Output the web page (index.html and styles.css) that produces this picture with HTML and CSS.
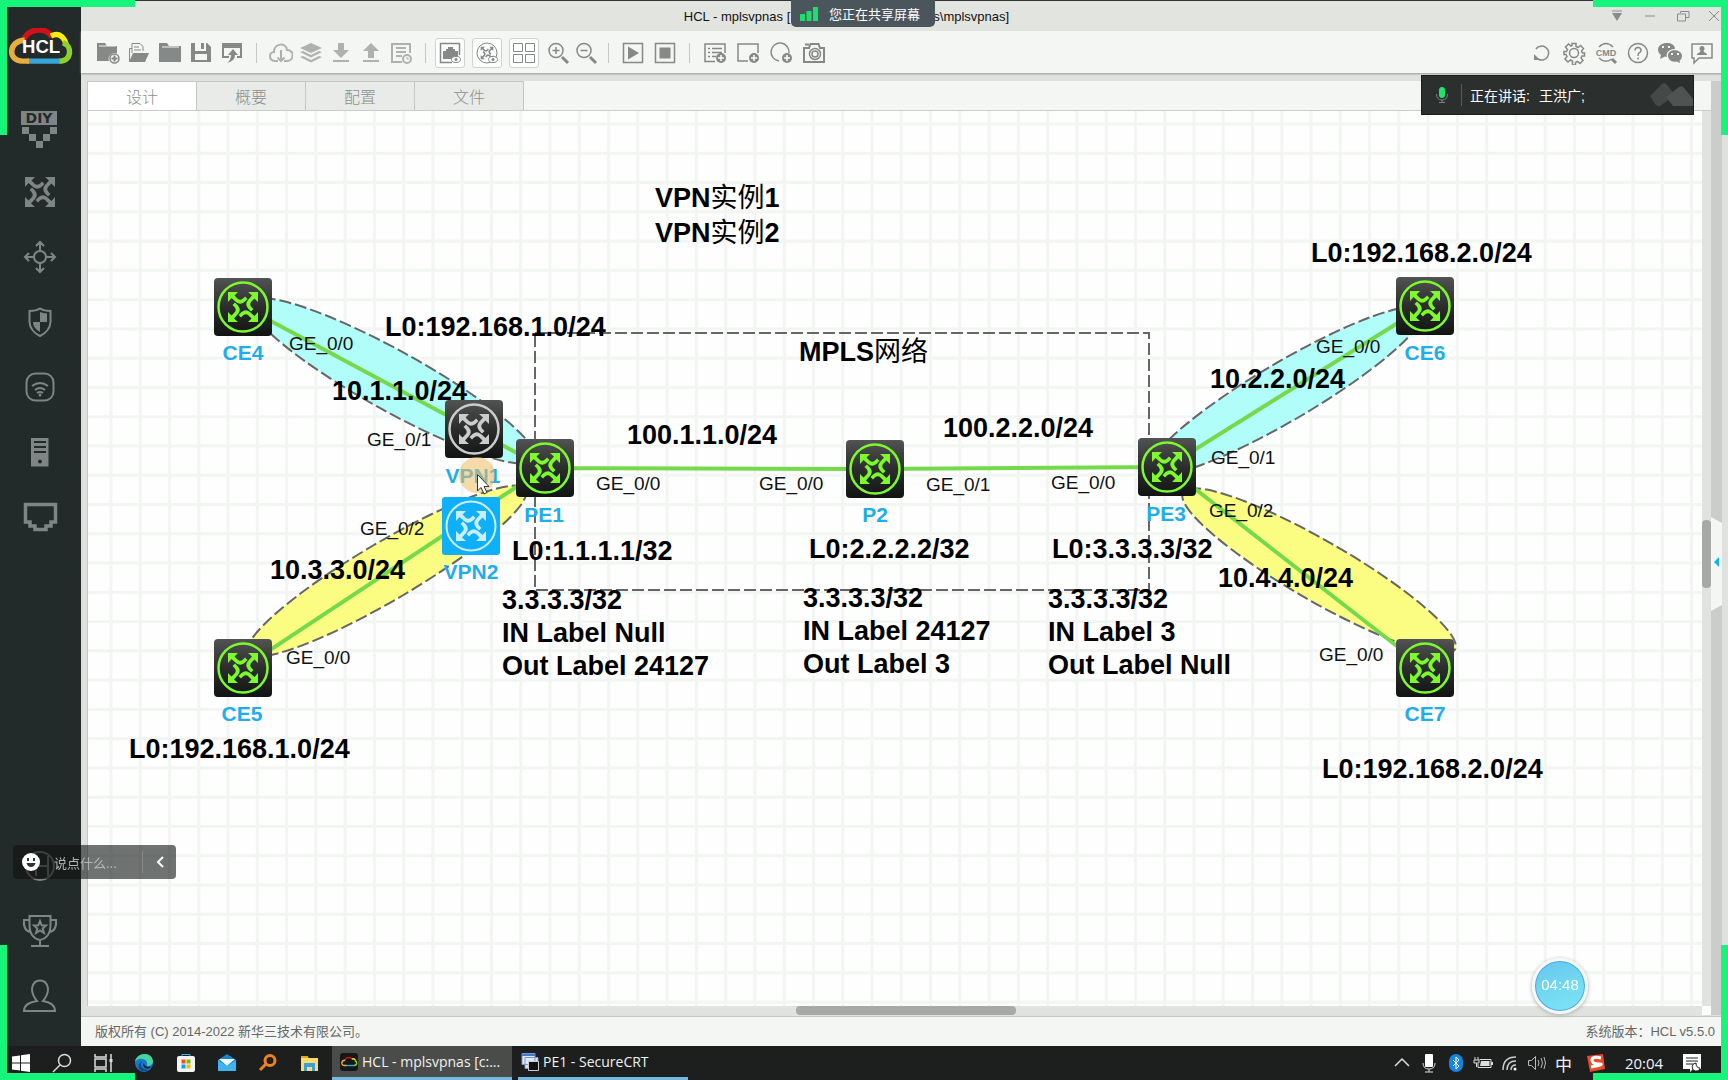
FILE: index.html
```html
<!DOCTYPE html>
<html lang="zh-CN">
<head>
<meta charset="utf-8">
<title>HCL - mplsvpnas</title>
<link rel="stylesheet" href="styles.css">
</head>
<body>
<svg class="defs" aria-hidden="true">
  <defs>
    <g id="arrow-arm">
      <path d="M-15-15H-5L-8.500-11.500L-5.500-8.500Q-3-6 0-8.500L2-10.500L4.500-8L1.500-5Q-3-1.500-7-5L-11.500-9L-15-5Z"/>
    </g>
    <g id="arrows">
      <use href="#arrow-arm"/>
      <use href="#arrow-arm" transform="rotate(90)"/>
      <use href="#arrow-arm" transform="rotate(180)"/>
      <use href="#arrow-arm" transform="rotate(270)"/>
    </g>
    <linearGradient id="dark" x1="0" y1="0" x2="0" y2="1">
      <stop offset="0" stop-color="#525453"/><stop offset=".5" stop-color="#2c2e2d"/><stop offset="1" stop-color="#121413"/>
    </linearGradient>
    <g id="router">
      <rect x="-29" y="-29" width="58" height="58" rx="4" fill="url(#dark)"/>
      <circle r="24.500" fill="none" stroke="currentColor" stroke-width="2.500"/>
      <use href="#arrows" fill="currentColor"/>
    </g>
    <g id="cloud" fill="none" stroke-width="5">
      <path d="M21 14C27 3 42 3 47 12" stroke="#d11218"/>
      <path d="M46 11C54 7 59 13 60 20" stroke="#f7ee13"/>
      <path d="M57 17C66 20 65 34 54 34H53" stroke="#8fd02c"/>
      <path d="M54 34H24" stroke="#36a5d8"/>
      <path d="M26 34H20C6 34 7 15 22 15" stroke="#e9ad3d"/>
    </g>
    <pattern id="grid" x="109.500" y="122.500" width="29.270" height="29.270" patternUnits="userSpaceOnUse">
      <path d="M0 1.500H29.270M1.500 0V29.270" stroke="#f2f5f2" stroke-width="3"/>
    </pattern>
  </defs>
</svg>

<div class="desktop">
  <div class="app">
    <nav class="sidebar" aria-label="设备">
      <svg class="logo" viewBox="4 4 64 36"><use href="#cloud"/><text x="37" y="27" class="logo-text">HCL</text></svg>
      <div class="side-group">
        <button class="side-btn" aria-label="DIY"><svg viewBox="-20 -20 40 40"><path fill="currentColor" d="M-19-16h36v14h-36zM-18 0h7v7h-7zM-11 7h7v7h-7zM-4 14h7v7h-7zM3 7h7v7H3zM10 0h7v7h-7z"/><text x="-1" y="-4" class="diy">DIY</text></svg></button>
        <button class="side-btn" aria-label="路由器"><svg viewBox="-20 -20 40 40"><use href="#arrows" fill="currentColor"/></svg></button>
        <button class="side-btn" aria-label="交换机"><svg viewBox="-20 -20 40 40"><g class="line"><circle r="6"/><path d="M0-6V-15M-4-11L0-15L4-11M0 6V15M-4 11L0 15L4 11M-6 0H-15M-11-4L-15 0L-11 4M6 0H15M11-4L15 0L11 4"/></g></svg></button>
        <button class="side-btn" aria-label="防火墙"><svg viewBox="-20 -20 40 40"><path class="line" d="M-10.500-11Q-4-11 0-13.500Q4-11 10.500-11V0Q10 9 0 14Q-10 9-10.500 0Z"/><path fill="currentColor" d="M0-10Q3-9 7-8.500V0H0ZM0 0V10Q-7 6-7 0Z"/></svg></button>
        <button class="side-btn" aria-label="无线"><svg viewBox="-20 -20 40 40"><rect class="line" x="-13.500" y="-13.500" width="27" height="27" rx="9"/><path class="line" d="M-8-1Q0-7 8-1M-5 3Q0-1 5 3"/><path class="line" d="M-3 6Q0 4 3 6"/><circle cy="8" r="1.500" fill="currentColor"/></svg></button>
        <button class="side-btn" aria-label="服务器"><svg viewBox="-20 -20 40 40"><path fill="currentColor" fill-rule="evenodd" d="M-9-14H8.500V14.500H-9ZM-6-11V-9H6V-11ZM-6-6V-4H6V-6ZM-6-1V1H6V-1ZM-2 9.500A2 2 0 1 0 2 9.500A2 2 0 1 0-2 9.500"/></svg></button>
        <button class="side-btn" aria-label="端口"><svg viewBox="-20 -20 40 40"><path fill="none" stroke="currentColor" stroke-width="3.500" d="M-14.500-12.500H15.500V5H11V9H6V12.500H-5V9H-10V5H-14.500Z"/></svg></button>
      </div>
      <div class="side-group side-bottom">
        <button class="side-btn" aria-label="H3C"><svg viewBox="-20 -20 40 40"><circle class="line" r="14"/><path class="line" d="M-4-10V10M8-10V10M-4 0H8"/></svg></button>
        <button class="side-btn" aria-label="奖杯"><svg viewBox="-20 -20 40 40"><path class="line" d="M-10.500-15H10.500V-5Q10 7 0 9Q-10 7-10.500-5ZM-10.500-11H-16Q-17 0-9 1M10.500-11H16Q17 0 9 1M0 9V15M-9 15H9M0-10L1.700-5.700L6-5.500L2.700-2.500L4 2L0-.500L-4 2L-2.700-2.500L-6-5.500L-1.700-5.700Z"/></svg></button>
        <button class="side-btn" aria-label="用户"><svg viewBox="-20 -20 40 40"><path class="line" d="M-3 5Q-8-1-8-7Q-7-15.500 0-15.500Q7-15.500 8-7Q8-1 3 5Q15 7 15 15H-16Q-16 7-3 5Z"/></svg></button>
      </div>
    </nav>

    <main class="main">
      <header class="titlebar">
        <div class="title"><span>HCL - mplsvpnas [</span><span>s\mplsvpnas]</span></div>
        <div class="win-controls">
          <button aria-label="菜单"><svg viewBox="0 0 16 16"><path d="M3 3h10" stroke="currentColor"/><path d="M3 5h10l-5 8z" fill="currentColor"/></svg></button>
          <button aria-label="最小化"><svg viewBox="0 0 16 16"><path d="M3 8h10" stroke="currentColor"/></svg></button>
          <button aria-label="还原"><svg viewBox="0 0 16 16"><path d="M5.500 5V3.500H14V9.500H11M2.500 6H10.500V13H2.500Z" fill="none" stroke="currentColor"/></svg></button>
          <button aria-label="关闭"><svg viewBox="0 0 16 16"><path d="M3 3L13 13M13 3L3 13" stroke="currentColor"/></svg></button>
        </div>
      </header>

      <div class="toolbar">
        <div class="tools w31">
          <button aria-label="新建"><svg viewBox="0 0 24 24"><path fill="currentColor" d="M1 2h8l2 3h10v7.500a6 6 0 0 0-8 7.500H1z"/><path d="M3 5h17" stroke="#f4f6f3"/><circle cx="18.500" cy="17.500" r="4.500" fill="none" stroke="currentColor" stroke-width="1.500"/><path d="M18.500 14.500v6M15.500 17.500h6" stroke="currentColor" stroke-width="2"/></svg></button>
          <button aria-label="打开"><svg viewBox="0 0 24 24"><path fill="none" stroke="currentColor" d="M2.500 20V7.500H5M5 12V2.500h8l3 3V10M7 6h5M7 9h7"/><path fill="currentColor" d="M6 12h16l-4 9H2z"/></svg></button>
          <button aria-label="工程"><svg viewBox="0 0 24 24"><path fill="currentColor" d="M1 2h8l2 3h12v16H1z"/><path d="M4 6h17" stroke="#f4f6f3"/></svg></button>
          <button aria-label="保存"><svg viewBox="0 0 24 24"><path fill="currentColor" fill-rule="evenodd" d="M2 2h4v8h11V2h1l4 4v15H2zM6 13v6h12v-6zM12 2h3v6h-3z"/></svg></button>
          <button aria-label="导出"><svg viewBox="0 0 24 24"><path fill="none" stroke="currentColor" stroke-width="2" d="M9 16H3V3h18v13h-4"/><path fill="currentColor" d="M3 3h18v4H3zM13 8l5 6h-3q0 6-8 8q4-3 4-8H8z"/></svg></button>
        </div>
        <i class="sep"></i>
        <div class="tools w30 pale">
          <button aria-label="下载云"><svg viewBox="0 0 24 24"><path fill="none" stroke="currentColor" stroke-width="2" d="M9 20H6C-1 19 0 11 5 11C5 2 17 1 18 9C26 9 25 20 18 20H15M12 9v11M8.500 16.500L12 20l3.500-3.500"/></svg></button>
          <button aria-label="图层"><svg viewBox="0 0 24 24"><path fill="currentColor" d="M12 2l11 5-11 5L1 7zM1 11l3-1 8 4 8-4 3 1-11 5.500zM1 16l3-1 8 4 8-4 3 1-11 5.500z"/></svg></button>
          <button aria-label="下载"><svg viewBox="0 0 24 24"><path fill="currentColor" d="M9 2h6v7h5l-8 8-8-8h5zM4 19h16v2H4z"/></svg></button>
          <button aria-label="上传"><svg viewBox="0 0 24 24"><path fill="currentColor" d="M12 2l8 8h-5v7H9v-7H4zM4 19h16v2H4z"/></svg></button>
          <button aria-label="日志"><svg viewBox="0 0 24 24"><path fill="none" stroke="currentColor" stroke-width="2" d="M13 21H3V3h18v9M7 7h10M7 11h10M7 15h6"/><circle cx="18" cy="18" r="4" fill="none" stroke="currentColor" stroke-width="2"/><path d="M18 16v2h2" stroke="currentColor" fill="none"/></svg></button>
        </div>
        <i class="sep"></i>
        <div class="tools boxed">
          <button aria-label="显示接口"><svg viewBox="0 0 24 24"><path fill="none" stroke="currentColor" stroke-width="1.500" d="M14 21.500H2.500v-19h19V14"/><path fill="currentColor" d="M5 10h3V8h2V6h5v2h2v2h3v5l-6 3H5z"/><ellipse cx="18" cy="18.500" rx="4.500" ry="3" fill="#fff" stroke="currentColor"/><circle cx="18" cy="18.500" r="1.500" fill="currentColor"/></svg></button>
          <button aria-label="显示设备"><svg viewBox="0 0 24 24"><circle cx="12" cy="12" r="10" fill="none" stroke="currentColor"/><use href="#arrows" fill="currentColor" transform="translate(12 12) scale(.42)"/><ellipse cx="18" cy="18.500" rx="4.500" ry="3" fill="#fff" stroke="currentColor"/><circle cx="18" cy="18.500" r="1.500" fill="currentColor"/></svg></button>
          <button aria-label="显示网格"><svg viewBox="0 0 24 24"><path fill="none" stroke="currentColor" d="M1.500 2.500h9v8h-9zM13.500 2.500h9v8h-9zM1.500 13.500h9v8h-9zM13.500 13.500h9v8h-9z"/></svg></button>
        </div>
        <div class="tools w28">
          <button aria-label="放大"><svg viewBox="0 0 24 24"><circle cx="10" cy="9.500" r="7" fill="none" stroke="currentColor" stroke-width="1.500"/><path d="M10 6v7M6.500 9.500h7" stroke="currentColor" stroke-width="1.500"/><path d="M16 16l6 6" stroke="currentColor" stroke-width="3"/></svg></button>
          <button aria-label="缩小"><svg viewBox="0 0 24 24"><circle cx="10" cy="9.500" r="7" fill="none" stroke="currentColor" stroke-width="1.500"/><path d="M6.500 9.500h7" stroke="currentColor" stroke-width="1.500"/><path d="M16 16l6 6" stroke="currentColor" stroke-width="3"/></svg></button>
        </div>
        <i class="sep tight"></i>
        <div class="tools w32">
          <button aria-label="启动"><svg viewBox="0 0 24 24"><path fill="none" stroke="currentColor" stroke-width="1.500" d="M2.500 2.500h19v19h-19z"/><path fill="currentColor" d="M7 5.500l11 6.500-11 6.500z"/></svg></button>
          <button aria-label="停止"><svg viewBox="0 0 24 24"><path fill="none" stroke="currentColor" stroke-width="1.500" d="M2.500 2.500h19v19h-19z"/><path fill="currentColor" d="M6.500 6.500h11v11h-11z"/></svg></button>
        </div>
        <i class="sep tight"></i>
        <div class="tools w33">
          <button aria-label="添加文本"><svg viewBox="0 0 24 24"><path fill="none" stroke="currentColor" stroke-width="1.500" d="M12 20.500H2V3h20v9M5 7.500h2M9 7.500h10M5 11.500h2M9 11.500h10M5 15.500h2M9 15.500h4"/><circle cx="18" cy="17" r="5" fill="currentColor"/><path d="M18 14v6M15 17h6" stroke="#fff" stroke-width="1.500"/></svg></button>
          <button aria-label="添加矩形"><svg viewBox="0 0 24 24"><path fill="none" stroke="currentColor" stroke-width="1.500" d="M12 20H2V3h20v9"/><circle cx="18" cy="17" r="5" fill="currentColor"/><path d="M18 14v6M15 17h6" stroke="#fff" stroke-width="1.500"/></svg></button>
          <button aria-label="添加椭圆"><svg viewBox="0 0 24 24"><path fill="none" stroke="currentColor" stroke-width="1.500" d="M10 20A9 9 0 1 1 20 12"/><circle cx="18" cy="17" r="5" fill="currentColor"/><path d="M18 14v6M15 17h6" stroke="#fff" stroke-width="1.500"/></svg></button>
          <button aria-label="截图"><svg viewBox="0 0 24 24"><path fill="none" stroke="currentColor" stroke-width="2" d="M2 7h5l1.500-4h8L18 7h4v14H2z"/><circle cx="13" cy="13" r="5.500" fill="none" stroke="currentColor" stroke-width="1.500"/><circle cx="13" cy="13" r="3" fill="none" stroke="currentColor" stroke-width="1.500"/><path d="M3 3.500h4" stroke="currentColor" stroke-width="2"/></svg></button>
        </div>
        <div class="tools w32 right">
          <button aria-label="刷新"><svg viewBox="0 0 24 24"><path fill="none" stroke="currentColor" stroke-width="1.500" d="M6 8A7 7 0 1 1 8 18"/><path fill="currentColor" d="M4 13v6h6z"/></svg></button>
          <button aria-label="设置"><svg viewBox="0 0 24 24"><circle cx="12" cy="12" r="4.500" fill="none" stroke="currentColor" stroke-width="1.500"/><path fill="none" stroke="currentColor" stroke-width="1.500" d="M10 2.500h4v3l2 1 2.500-2 3 3-2 2.500 1 2h2v3h-2.500l-1 2 2 2.500-3 3-2.500-2-2 1v2.500h-3V20l-2-1-2.500 2-3-3 2-2.500-1-2H2v-3h2.500l1-2-2-2.500 3-3 2.500 2 1-.500z"/></svg></button>
          <button aria-label="CMD"><svg viewBox="0 0 24 24"><path fill="none" stroke="currentColor" stroke-width="1.500" d="M5 6Q12-1 19 6M5 17Q11 23 18 18"/><path stroke="currentColor" stroke-width="3" d="M18 18l4 4"/><text x="12" y="15" class="cmd">CMD</text></svg></button>
          <button aria-label="帮助"><svg viewBox="0 0 24 24"><circle cx="12" cy="12" r="9.500" fill="none" stroke="currentColor" stroke-width="1.500"/><path fill="none" stroke="currentColor" stroke-width="1.500" d="M9 9.500Q9 6.500 12 6.500T15 9.500Q15 11 13 12Q12 12.500 12 15M12 16.500v2"/></svg></button>
          <button aria-label="微信"><svg viewBox="0 0 24 24"><path fill="currentColor" d="M0 9C0 0 17 0 17 8C9 8 8 14 9 16L7 15.500 2 18 3 14Q0 12 0 9"/><path fill="currentColor" d="M10 14.500C10 7 24 8 24 15Q24 18 21.500 19.500L22 22 18.500 20.500C13 21.500 10 18 10 14.500"/><path d="M4 6h2M10 6h2M13 13h2M19 13h2" stroke="#f4f6f3" stroke-width="2"/></svg></button>
          <button aria-label="反馈"><svg viewBox="0 0 24 24"><path fill="none" stroke="currentColor" stroke-width="1.500" d="M2 3h20v14H9l-5 5v-5H2z"/><circle cx="12" cy="7.500" r="2.500" fill="currentColor"/><path fill="currentColor" d="M11 9h2l1 2 3 2v1H7v-1l3-2z"/></svg></button>
        </div>
      </div>

      <div class="workspace">
        <div class="editor">
          <div class="tabs" role="tablist">
            <button class="tab active" role="tab">设计</button>
            <button class="tab" role="tab">概要</button>
            <button class="tab" role="tab">配置</button>
            <button class="tab" role="tab">文件</button>
          </div>
          <div class="canvas-row">
            <svg class="canvas" role="img" aria-label="MPLS 网络拓扑">
              <g transform="translate(-88 -111)">
                <rect x="88" y="111" width="100%" height="100%" fill="#fdfefd"/>
                <rect x="88" y="111" width="100%" height="100%" fill="url(#grid)"/>
                <g class="shape">
                  <rect x="535" y="333" width="614" height="257" fill="none"/>
                  <ellipse class="cyan" rx="162" ry="30" transform="translate(393 381) rotate(29)"/>
                  <ellipse class="yellow" rx="161" ry="29" transform="translate(387 571) rotate(-30.500)"/>
                  <ellipse class="cyan" rx="158" ry="29" transform="translate(1286 391) rotate(-30.500)"/>
                  <ellipse class="yellow" rx="157" ry="30" transform="translate(1319 571) rotate(30)"/>
                </g>
                <g class="links">
                  <path d="M243 306L545 468M243 668L545 468M545 468L875 469M875 469L1167 467M1167 467L1425 306M1167 467L1425 668"/>
                </g>
                <g class="note">
                  <text x="655" y="207">VPN<tspan class="han">实例</tspan>1</text>
                  <text x="655" y="242">VPN<tspan class="han">实例</tspan>2</text>
                  <text x="385" y="336">L0:192.168.1.0/24</text>
                  <text x="799" y="361">MPLS<tspan class="han">网络</tspan></text>
                  <text x="332" y="400">10.1.1.0/24</text>
                  <text x="627" y="444">100.1.1.0/24</text>
                  <text x="943" y="437">100.2.2.0/24</text>
                  <text x="1210" y="388">10.2.2.0/24</text>
                  <text x="1311" y="262">L0:192.168.2.0/24</text>
                  <text x="270" y="579">10.3.3.0/24</text>
                  <text x="1218" y="587">10.4.4.0/24</text>
                  <text x="512" y="560">L0:1.1.1.1/32</text>
                  <text x="809" y="558">L0:2.2.2.2/32</text>
                  <text x="1052" y="558">L0:3.3.3.3/32</text>
                  <text x="129" y="758">L0:192.168.1.0/24</text>
                  <text x="1322" y="778">L0:192.168.2.0/24</text>
                  <text x="502" y="609">3.3.3.3/32</text>
                  <text x="502" y="642">IN Label Null</text>
                  <text x="502" y="675">Out Label 24127</text>
                  <text x="803" y="607">3.3.3.3/32</text>
                  <text x="803" y="640">IN Label 24127</text>
                  <text x="803" y="673">Out Label 3</text>
                  <text x="1048" y="608">3.3.3.3/32</text>
                  <text x="1048" y="641">IN Label 3</text>
                  <text x="1048" y="674">Out Label Null</text>
                </g>
                <g class="port">
                  <text x="289" y="350">GE_0/0</text>
                  <text x="367" y="446">GE_0/1</text>
                  <text x="360" y="535">GE_0/2</text>
                  <text x="286" y="664">GE_0/0</text>
                  <text x="596" y="490">GE_0/0</text>
                  <text x="759" y="490">GE_0/0</text>
                  <text x="926" y="491">GE_0/1</text>
                  <text x="1051" y="489">GE_0/0</text>
                  <text x="1316" y="353">GE_0/0</text>
                  <text x="1211" y="464">GE_0/1</text>
                  <text x="1209" y="517">GE_0/2</text>
                  <text x="1319" y="661">GE_0/0</text>
                </g>
                <g class="node">
                  <use href="#router" x="243" y="307"/><text x="243" y="360">CE4</text>
                  <use href="#router" x="545" y="468"/><text x="544" y="522">PE1</text>
                  <use href="#router" x="875" y="469"/><text x="875" y="522">P2</text>
                  <use href="#router" x="1167" y="467"/><text x="1166" y="521">PE3</text>
                  <use href="#router" x="1425" y="306"/><text x="1425" y="360">CE6</text>
                  <use href="#router" x="243" y="668"/><text x="242" y="721">CE5</text>
                  <use href="#router" x="1425" y="668"/><text x="1425" y="721">CE7</text>
                  <use class="off" href="#router" x="474" y="429"/><text x="473" y="483">VPN1</text>
                  <g transform="translate(471 526)" class="picked"><rect x="-29" y="-29" width="58" height="58" rx="3"/><circle r="24.500"/><use href="#arrows"/></g><text x="471" y="579">VPN2</text>
                </g>
                <circle cx="477" cy="475" r="18" fill="#eebb66" fill-opacity=".55"/>
                <path d="M477.500 474.500V491L481 487.500L484 494L487 492.500L484 486.500H489Z" fill="#fff" stroke="#333"/>
              </g>
            </svg>
            <div class="vscroll"><div class="vthumb"></div></div>
          </div>
          <div class="hscroll"><div class="hthumb"></div></div>
        </div>
        <aside class="drawer"><button class="drawer-handle" aria-label="展开"><svg viewBox="0 0 11 94"><path d="M0 0L11 6V88L0 94Z" fill="#f4f6f3"/><path d="M8 40V50L3 45Z" fill="#12b4ee"/></svg></button></aside>
        <div class="edge"></div>
      </div>

      <footer class="status"><span>版权所有 (C) 2014-2022 新华三技术有限公司。</span><span>系统版本：HCL v5.5.0</span></footer>
    </main>
  </div>

  <div class="taskbar">
    <div class="pins">
      <button aria-label="开始"><svg viewBox="0 0 20 20"><path fill="#fff" d="M1 3.500l8-1V9.500H1zM10 2.300L19 1v8.500h-9zM1 10.500h8v7L1 16.500zM10 10.500h9V19l-9-1.300z"/></svg></button>
      <button aria-label="搜索"><svg viewBox="0 0 20 20"><circle cx="12.500" cy="7.500" r="6" fill="none" stroke="#ddd" stroke-width="1.500"/><path d="M8 12L1 19" stroke="#ddd" stroke-width="1.500"/></svg></button>
      <button aria-label="任务视图"><svg viewBox="0 0 20 20"><path fill="none" stroke="#ddd" stroke-width="1.500" d="M2 1v3h11V1M2 6h11v8H2zM2 19v-3h11v3M18 1v5M18 9v10"/><path d="M16.500 6h3v3h-3z" fill="#ddd"/></svg></button>
      <button aria-label="Edge"><svg viewBox="0 0 20 20"><circle cx="10" cy="10" r="9" fill="#1679c9"/><path fill="#48d3a0" d="M1 9C2-1 19-2 19 9Q18 13 13 13Q14 7 9 6Q4 5 1 9"/><path fill="#0b4d92" d="M8 8Q4 16 15 17Q8 20 5 16Q3 11 8 8"/><path fill="#1c1f1d" d="M10 10Q10 13 14 14Q17 14 18 13Q15 17 11 15Q8 12 10 10"/></svg></button>
      <button aria-label="商店"><svg viewBox="0 0 20 20"><path fill="none" stroke="#39b8e8" d="M6 4V1.500h8V4"/><rect x="1" y="3" width="18" height="16" rx="2" fill="#f3f3f3"/><path fill="#f25022" d="M5.500 6.500h4v4h-4z"/><path fill="#7fba00" d="M10.500 6.500h4v4h-4z"/><path fill="#00a4ef" d="M5.500 11.500h4v4h-4z"/><path fill="#ffb900" d="M10.500 11.500h4v4h-4z"/></svg></button>
      <button aria-label="邮件"><svg viewBox="0 0 20 20"><path fill="#1583d0" d="M1 7l9-6 9 6v11H1z"/><path fill="#eef8fd" d="M2 6h16l-8 7z"/><path fill="#3fb4ee" d="M1 7l9 6.500L19 7v11H1z"/></svg></button>
      <button aria-label="查找"><svg viewBox="0 0 20 20"><circle cx="12" cy="7.500" r="5" fill="none" stroke="#f08020" stroke-width="3"/><path d="M8 11L2 17" stroke="#f08020" stroke-width="3"/></svg></button>
      <button aria-label="资源管理器"><svg viewBox="0 0 20 20"><path fill="#e2a71e" d="M2 3h7l1 3H2z"/><path fill="#fbdc6c" d="M2 5h17v13H2z"/><path fill="#3c9ee0" d="M5 18v-8h11v8h-3v-4H8v4z"/></svg></button>
    </div>
    <button class="task current"><svg viewBox="0 0 20 20"><rect x="1" y="1" width="18" height="18" rx="3" fill="#151817"/><use href="#cloud" transform="translate(0 4) scale(.28)"/></svg><span>HCL - mplsvpnas [c:...</span></button>
    <button class="task second"><svg viewBox="0 0 20 20"><path fill="#dfe9f6" stroke="#7a96c8" d="M2 1.500h13v11H2zM5 5.500h13v11H5z"/><path fill="#4a76c8" d="M2 2h13v2H2z"/><path fill="#111" stroke="#ccc" d="M8.500 9.500h10v9h-10z"/></svg><span>PE1 - SecureCRT</span></button>
    <div class="tray">
      <button aria-label="显示隐藏图标"><svg viewBox="0 0 20 20"><path d="M3 13l7-7 7 7" fill="none" stroke="#ddd" stroke-width="1.500"/></svg></button>
      <button aria-label="麦克风"><svg viewBox="0 0 20 20"><rect x="6" y="1" width="8" height="13" rx="1" fill="#fff"/><path d="M4 10q0 6 6 6t6-6M10 16v3M6 19h8" fill="none" stroke="#ddd"/></svg></button>
      <button aria-label="蓝牙"><svg viewBox="0 0 20 20"><rect x="3" y="1" width="14" height="18" rx="7" fill="#1683dc"/><path d="M7 7l6 6-3 3V4l3 3-6 6" fill="none" stroke="#fff"/></svg></button>
      <button aria-label="电池"><svg viewBox="0 0 20 20"><path d="M6.500 6.500H18v8H5V11M2 4v3M5 4v3M1 7h5v3H1zM3.500 10v4" fill="none" stroke="#ddd"/><path fill="#ddd" d="M8 8h8.500v5H7zM18 9h2v3h-2z"/></svg></button>
      <button aria-label="网络"><svg viewBox="0 0 20 20"><path d="M3 17Q3 4 16 4M7 17Q7 8 16 8M11 17Q11 12 16 12" fill="none" stroke="#ccc" stroke-width="1.500"/><circle cx="15" cy="16" r="1.500" fill="#fff"/></svg></button>
      <button aria-label="音量"><svg viewBox="0 0 20 20"><path d="M1.500 7.500h3l4-4v13l-4-4h-3zM11 7q2 3 0 6M14 5q3 5 0 10M17 4q3 6 0 12" fill="none" stroke="#bbb"/></svg></button>
      <button class="ime">中</button>
      <button class="wide" aria-label="搜狗输入法"><svg viewBox="0 0 20 20"><path fill="#e8492b" d="M1 3l16-2 2 15-15 3z"/><path d="M15 5Q6 3 6 7T13 11T5 14" fill="none" stroke="#fff" stroke-width="3"/></svg></button>
      <time class="clock">20:04</time>
      <button class="wide" aria-label="通知"><svg viewBox="0 0 20 20"><path fill="#fff" d="M1 1h18v15h-8l-3 3v-3H1z"/><path d="M4 5h12M4 8h12M4 11h7" stroke="#222"/><path d="M14 10a4 4 0 1 0 4 5q-4 0-4-5" fill="#fff" stroke="#222"/></svg></button>
    </div>
  </div>
</div>

<div class="share-pill"><svg viewBox="0 0 18 14"><path fill="#1fdc6c" d="M0 7h5v7H0zM6.500 4h5v10h-5zM13 0h5v14h-5z"/></svg><span>您正在共享屏幕</span></div>
<div class="speaker"><svg class="mic" viewBox="0 0 14 18"><rect x="4" y="1" width="6" height="11" rx="3" fill="#1fe36c"/><path d="M1.500 8q0 6 5.500 6t5.500-6M7 14v3M4 16.500h6" fill="none" stroke="#7a807d"/></svg><i></i><span>正在讲话:</span><span>王洪广;</span><svg class="wave" viewBox="0 0 44 26"><path fill="#454a48" d="M1 14L13 2q3-2 5 1L26 13 11 24q-3 1-5-2z"/><path fill="#4f5452" d="M17 15L30 5q3-2 5 1l9 11v7H24z"/></svg></div>
<div class="chat"><svg class="smile" viewBox="0 0 20 20"><circle cx="10" cy="10" r="9" fill="#fff"/><path d="M7 6v3M13 6v3" stroke="#333" stroke-width="2"/><path d="M5.500 11h9q-1 4-4.500 4t-4.500-4" fill="#333"/></svg><input type="text" placeholder="说点什么..." aria-label="说点什么"><button aria-label="收起"><svg viewBox="0 0 12 14"><path d="M9 2L4 7l5 5" fill="none" stroke="#fff" stroke-width="2"/></svg></button></div>
<div class="timer">04:48</div>
<i class="corner tl"></i><i class="corner tr"></i><i class="corner bl"></i><i class="corner br"></i>
</body>
</html>
```
FILE: styles.css
```css
* { box-sizing: border-box; }
body { margin: 0; font-family: "Liberation Sans", "Noto Sans CJK SC", sans-serif; font-size: 13px; color: #666; }
button { border: 0; padding: 0; margin: 0; background: none; font: inherit; color: inherit; display: flex; align-items: center; justify-content: center; }
svg { display: block; }
.defs { position: absolute; width: 0; height: 0; }

.desktop { display: flex; flex-direction: column; height: 100vh; overflow: hidden; }
.app { flex: 1; min-height: 0; display: flex; background: #232a2a; }

/* device sidebar */
.sidebar { width: 81px; display: flex; flex-direction: column; padding: 28px 0 18px; color: #7f8584; }
.logo { width: 70px; height: 40px; margin-left: 5px; }
.logo-text { font: bold 17px "Liberation Sans", sans-serif; fill: #fff; text-anchor: middle; }
.side-group { display: flex; flex-direction: column; margin-top: 26px; }
.side-bottom { margin-top: auto; }
.side-btn { height: 65px; width: 80px; }
.side-btn svg { width: 40px; height: 40px; overflow: visible; }
.line { fill: none; stroke: currentColor; stroke-width: 2; }
.diy { font: bold 14px "DejaVu Sans", sans-serif; fill: #232a2a; text-anchor: middle; }

.main { flex: 1; min-width: 0; display: flex; flex-direction: column; background: #dfe1de; }
.titlebar { height: 31px; border-top: 1px solid #333; background: #e2e4e0; display: flex; align-items: center; justify-content: center; position: relative; color: #111; flex: none; }
.title { display: flex; gap: 143px; margin-right: 116px; }
.win-controls { position: absolute; right: 0; top: 7px; display: flex; color: #888c89; }
.win-controls button { width: 33px; height: 16px; }
.win-controls button:last-child { width: 29px; }
.win-controls svg { width: 16px; height: 16px; flex: none; }

.toolbar { height: 42px; flex: none; background: #f4f6f3; box-shadow: 0 1px 2px #999; display: flex; align-items: center; padding: 1px 10px 0 11px; color: #858988; }
.tools { display: flex; }
.tools button { height: 30px; }
.tools svg { width: 24px; height: 24px; flex: none; }
.w28 button { width: 28px; }
.w30 button { width: 30px; }
.w31 button { width: 31px; }
.w32 button { width: 32px; }
.w33 button { width: 33px; }
.w28 { margin-left: 5px; }
.pale { color: #adb1af; }
.boxed { gap: 7px; }
.boxed button { width: 30px; background: #fdfefd; border: 1px solid #cfd2cf; border-radius: 3px; }
.right { margin-left: auto; }
.cmd { font: bold 9px "Liberation Sans", sans-serif; fill: currentColor; text-anchor: middle; }
.sep { width: 1px; height: 20px; background: #c4c7c4; margin: 0 9px; }
.tight { margin: 0 8px; }

.workspace { flex: 1; min-height: 0; display: flex; margin-top: 8px; }
.editor { flex: 1; min-width: 0; display: flex; flex-direction: column; padding-left: 6px; }
.tabs { height: 30px; flex: none; display: flex; background: #f4f6f3; border-bottom: 1px solid #c9ccc9; border-left: 1px solid #c4c7c4; }
.tab { width: 109px; height: 29px; font-size: 16px; font-weight: 300; color: #8c8f8d; background: #e8ebe8; border: 1px solid #c4c7c4; border-width: 1px 1px 0 0; }
.tab.active { background: #fff; }
.canvas-row { flex: 1; min-height: 0; display: flex; border-left: 1px solid #c4c7c4; }
.canvas { flex: 1; min-width: 0; height: 100%; overflow: hidden; }
.vscroll { width: 9px; background: #e1e3e0; padding-top: 409px; }
.vthumb { height: 68px; border-radius: 4px; background: #a7a9a6; }
.hscroll { height: 9px; flex: none; background: #e1e3e0; border-right: 9px solid #fff; }
.hthumb { width: 220px; height: 9px; margin-left: 709px; border-radius: 4px; background: #a7a9a6; }
.drawer { width: 11px; background: #cbcdca; padding-top: 436px; }
.drawer-handle { width: 11px; height: 94px; }
.drawer-handle svg { width: 11px; height: 94px; }
.edge { width: 6px; }

/* topology */
.shape { stroke: #666; stroke-width: 2; stroke-dasharray: 12 4; }
.cyan { fill: #b0fdfa; }
.yellow { fill: #fafd82; }
.links { stroke: #75da4b; stroke-width: 4; fill: none; }
.note { font: bold 27px "Liberation Sans", "Noto Sans CJK SC", sans-serif; fill: #000; }
.han { font-weight: 400; }
.port { font: 19px "Liberation Sans", sans-serif; fill: #111; }
.node { color: #7cfa2b; }
.node text { font: bold 21px "Liberation Sans", sans-serif; fill: #1fadec; text-anchor: middle; }
.off { color: #ccc; }
.picked rect { fill: #10affa; }
.picked circle { fill: none; stroke: #c9eefe; stroke-width: 2; }
.picked use { fill: #c9eefe; }

.status { height: 30px; flex: none; margin-top: 1px; border-top: 1px solid #c4c7c4; background: #f4f6f3; display: flex; align-items: center; justify-content: space-between; padding: 0 13px 3px 14px; }

/* taskbar */
.taskbar { height: 34px; flex: none; background: #1c1f1d; display: flex; align-items: stretch; color: #f2f2f2; font: 14px "Open Sans", "Noto Sans CJK SC", sans-serif; }
.pins { display: flex; width: 332px; padding-right: 2px; }
.pins button { flex: 1; }
.pins svg, .tray svg, .task svg { width: 20px; height: 20px; flex: none; }
.task { justify-content: flex-start; gap: 3px; padding-left: 7px; border-bottom: 3px solid #76b9e0; white-space: nowrap; }
.current { width: 180px; background: #4a4c4a; margin-right: 6px; }
.second { width: 170px; padding-left: 2px; }
.tray { margin-left: auto; display: flex; align-items: center; padding-right: 17px; }
.tray button { width: 27px; }
.tray .wide { width: 38px; }
.ime { font-size: 17px; }
.clock { width: 58px; text-align: center; font-size: 15px; }

/* meeting overlays */
.share-pill { position: fixed; left: 791px; top: 0; width: 144px; height: 27px; border-radius: 0 0 5px 5px; background: #4b555c; color: #fff; display: flex; align-items: center; gap: 11px; padding-left: 9px; }
.share-pill svg { width: 18px; height: 14px; }
.speaker { position: fixed; right: 34px; top: 75px; width: 273px; height: 40px; background: #2b302e; border: 1px solid #1a1d1c; color: #fff; font-size: 14px; display: flex; align-items: center; gap: 9px; padding-left: 13px; }
.mic { width: 14px; height: 18px; }
.speaker i { width: 1px; height: 22px; background: #565b59; margin: 0 -1px 0 3px; }
.wave { width: 44px; height: 26px; margin-left: auto; }
.chat { position: fixed; left: 13px; top: 845px; width: 163px; height: 34px; border-radius: 4px; background: rgba(15, 20, 18, .6); display: flex; align-items: center; }
.smile { width: 20px; height: 20px; margin: 0 13px 0 8px; flex: none; }
.chat input { width: 89px; height: 22px; border: 0; border-right: 1px solid #888; padding: 0; background: none; font: 13px "Noto Sans CJK SC", sans-serif; color: #bbb; }
.chat input::placeholder { color: #b4b8b6; opacity: 1; }
.chat button { flex: 1; }
.chat button svg { width: 12px; height: 14px; }
.timer { position: fixed; right: 140px; top: 958px; width: 56px; height: 56px; border-radius: 50%; border: 3px solid #f4f8f8; background: linear-gradient(160deg, #64c8ee, #7fe6f5); box-shadow: 0 1px 4px #aaa, inset 0 0 0 1px #4da3e8; color: #fff; font-size: 15px; line-height: 48px; text-align: center; }
.corner { position: fixed; width: 135px; height: 135px; border: 0 solid #16f47b; pointer-events: none; }
.tl { left: 0; top: 0; border-width: 7px 0 0 7px; }
.tr { right: 0; top: 0; border-width: 7px 7px 0 0; }
.bl { left: 0; bottom: 0; border-width: 0 0 7px 7px; }
.br { right: 0; bottom: 0; border-width: 0 7px 7px 0; }
```
